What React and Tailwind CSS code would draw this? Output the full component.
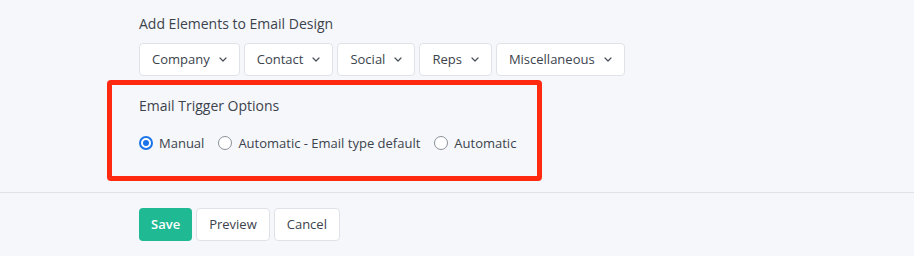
const groups = ["Company", "Contact", "Social", "Reps", "Miscellaneous"];

const triggers = [
  { label: "Manual", checked: true },
  { label: "Automatic - Email type default", checked: false },
  { label: "Automatic", checked: false },
];

function Chevron() {
  return (
    <svg width="8" height="5" viewBox="0 0 8 5" fill="none" className="shrink-0">
      <path d="M1 1l3 3 3-3" stroke="#4a5059" strokeWidth="1.2" strokeLinecap="round" strokeLinejoin="round" />
    </svg>
  );
}

function Radio({ checked }) {
  return checked ? (
    <span className="w-[14px] h-[14px] rounded-full bg-[#1a73e8] flex items-center justify-center">
      <span className="w-[10px] h-[10px] rounded-full border-2 border-white bg-[#1a73e8]" />
    </span>
  ) : (
    <span className="w-[14px] h-[14px] rounded-full border border-[#8a9099] bg-white" />
  );
}

export default function App() {
  return (
    <div className="w-[914px] h-[256px] bg-[#f5f7fa] text-[#3c434d] font-['Open_Sans',sans-serif] overflow-hidden">
      <div className="pl-[139px] pt-[14px]">
        <p className="text-[14px] leading-[20px]">Add Elements to Email Design</p>

        <div className="flex gap-[4px] mt-[9px]">
          {groups.map((g) => (
            <button
              key={g}
              className="h-[33px] px-[12px] flex items-center gap-[9px] bg-white border border-[#dfe3e8] rounded-[4px] text-[13px] text-[#3c434d]"
            >
              {g}
              <Chevron />
            </button>
          ))}
        </div>

        {/* Trigger options */}
        <div className="ml-[-32px] mt-[4px] w-[435px] h-[101px] border-[5px] border-[#ff2a10] rounded-[4px] pl-[27px] pt-[11px]">
          <p className="text-[14px] leading-[20px]">Email Trigger Options</p>
          <div className="flex items-center gap-[14px] mt-[17px]">
            {triggers.map((t) => (
              <label key={t.label} className="flex items-center gap-[6px] text-[13px] leading-[20px]">
                <Radio checked={t.checked} />
                {t.label}
              </label>
            ))}
          </div>
        </div>
      </div>

      <div className="border-t border-[#dfe3e8] mt-[11px]" />

      <div className="pl-[139px] pt-[15px] flex gap-[4px]">
        <button className="h-[33px] px-[12px] bg-[#1fb994] text-white rounded-[4px] text-[13px] font-semibold">
          Save
        </button>
        <button className="h-[33px] px-[12px] bg-white border border-[#dfe3e8] rounded-[4px] text-[13px] text-[#3c434d]">
          Preview
        </button>
        <button className="h-[33px] px-[12px] bg-white border border-[#dfe3e8] rounded-[4px] text-[13px] text-[#3c434d]">
          Cancel
        </button>
      </div>
    </div>
  );
}
